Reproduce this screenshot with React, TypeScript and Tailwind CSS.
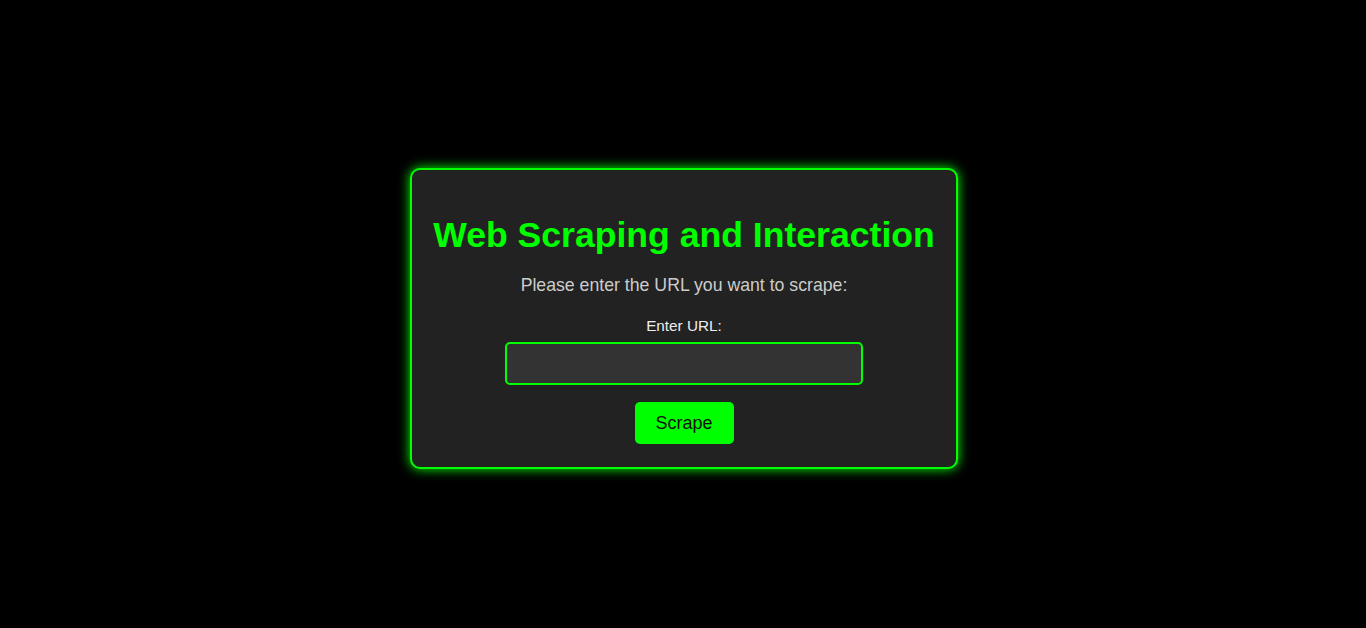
import React from "react";

export default function App() {
  return (
    <div
      className="min-h-[628px] w-full bg-black flex justify-center pt-[168px] pl-[2px]"
      style={{ fontFamily: '"Liberation Sans", Arial, sans-serif' }}
    >
      <div className="w-[548px] h-[301px] bg-[#222222] border-2 border-[#00ff00] rounded-[10px] shadow-[0_0_12px_#00ff00] flex flex-col items-center pt-[45px]">
        <h1 className="text-[35.6px] leading-[40px] font-bold text-[#00ff00] whitespace-nowrap">
          Web Scraping and Interaction
        </h1>
        <p className="mt-[20px] text-[17.7px] leading-[20px] text-[#cccccc]">
          Please enter the URL you want to scrape:
        </p>
        <label className="mt-[22px] text-[15.3px] leading-[18px] text-[#eeeeee]">
          Enter URL:
        </label>
        <input
          type="text"
          className="mt-[7px] w-[358px] h-[43px] bg-[#333333] border-2 border-[#00ff00] rounded-[5px] outline-none text-white px-2"
        />
        <button className="mt-[17px] h-[42px] w-[99px] bg-[#00ff00] rounded-[5px] text-[18px] leading-[20px] text-[#111111]">
          Scrape
        </button>
      </div>
    </div>
  );
}
